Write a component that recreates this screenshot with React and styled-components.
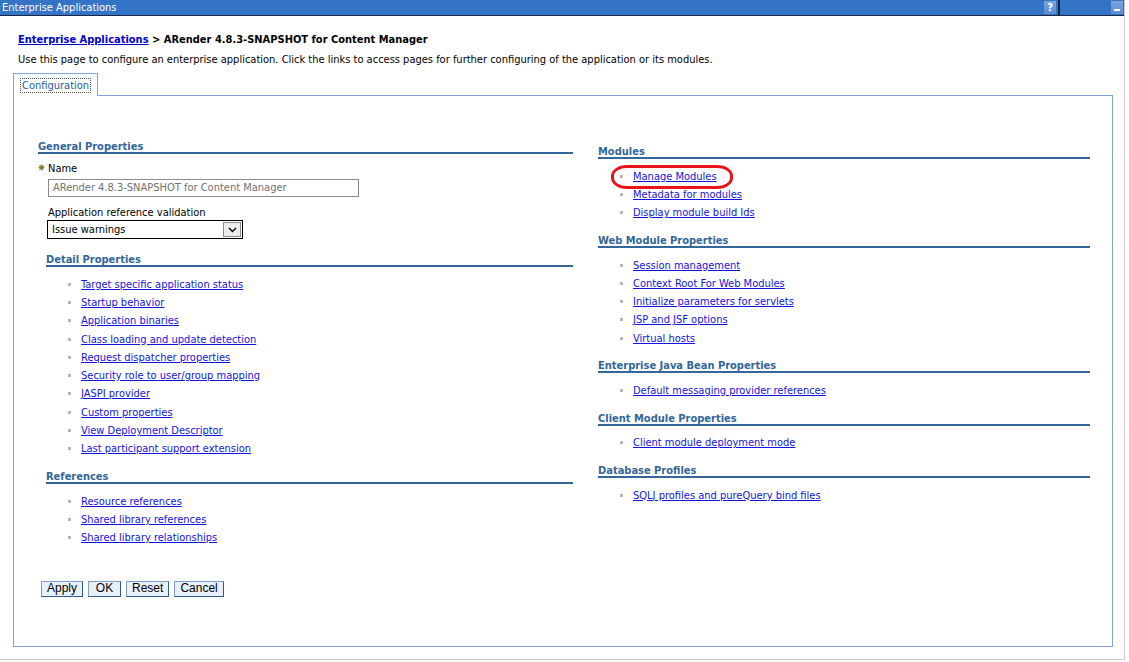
import React from "react";
import styled, { createGlobalStyle } from "styled-components";

const detailLinks = [
  "Target specific application status",
  "Startup behavior",
  "Application binaries",
  "Class loading and update detection",
  "Request dispatcher properties",
  "Security role to user/group mapping",
  "JASPI provider",
  "Custom properties",
  "View Deployment Descriptor",
  "Last participant support extension",
];

const referenceLinks = [
  "Resource references",
  "Shared library references",
  "Shared library relationships",
];

const rightSections = [
  {
    title: "Modules",
    links: ["Manage Modules", "Metadata for modules", "Display module build Ids"],
    marked: "Manage Modules",
  },
  {
    title: "Web Module Properties",
    links: [
      "Session management",
      "Context Root For Web Modules",
      "Initialize parameters for servlets",
      "JSP and JSF options",
      "Virtual hosts",
    ],
  },
  {
    title: "Enterprise Java Bean Properties",
    links: ["Default messaging provider references"],
  },
  {
    title: "Client Module Properties",
    links: ["Client module deployment mode"],
  },
  {
    title: "Database Profiles",
    links: ["SQLJ profiles and pureQuery bind files"],
  },
];

const buttons = ["Apply", "OK", "Reset", "Cancel"];

function LinkSection({ title, links, marked, indent }) {
  return (
    <Section $indent={indent}>
      <Heading>{title}</Heading>
      <LinkList>
        {links.map((l) => (
          <LinkItem key={l}>
            {l === marked && <Ring />}
            <Link href="#">{l}</Link>
          </LinkItem>
        ))}
      </LinkList>
    </Section>
  );
}

function App() {
  return (
    <>
      <GlobalStyle />
      <Frame>
        <TitleBar>
          <TitleText>Enterprise Applications</TitleText>
          <HelpButton>?</HelpButton>
          <Divider />
          <MinimizeButton />
        </TitleBar>
        <Content>
          <Breadcrumb>
            <CrumbLink href="#">Enterprise Applications</CrumbLink> &gt; ARender
            4.8.3-SNAPSHOT for Content Manager
          </Breadcrumb>
          <Description>
            Use this page to configure an enterprise application. Click the
            links to access pages for further configuring of the application
            or its modules.
          </Description>
          <TabStrip>
            <Tab>
              <TabLabel>Configuration</TabLabel>
            </Tab>
          </TabStrip>
          <Panel>
            <Columns>
              <Column>
                <Section>
                  <Heading>General Properties</Heading>
                  <Fields>
                    <NameLabel>
                      <Required viewBox="0 0 7 7">
                        <path
                          d="M3.5 0.5v6M0.5 3.5h6M1.3 1.3l4.4 4.4M5.7 1.3l-4.4 4.4"
                          stroke="#857a2c"
                          strokeWidth="1.2"
                        />
                      </Required>
                      Name
                    </NameLabel>
                    <TextBox>ARender 4.8.3-SNAPSHOT for Content Manager</TextBox>
                    <FieldLabel>Application reference validation</FieldLabel>
                    <SelectBox>
                      <span>Issue warnings</span>
                      <SelectArrow>
                        <svg width="9" height="6" viewBox="0 0 9 6">
                          <polyline
                            points="1,1 4.5,4.5 8,1"
                            fill="none"
                            stroke="#000"
                            strokeWidth="1.4"
                          />
                        </svg>
                      </SelectArrow>
                    </SelectBox>
                  </Fields>
                </Section>
                <LinkSection
                  title="Detail Properties"
                  links={detailLinks}
                  indent
                />
                <LinkSection title="References" links={referenceLinks} indent />
                <ButtonBar>
                  {buttons.map((b) => (
                    <Button key={b}>{b}</Button>
                  ))}
                </ButtonBar>
              </Column>
              <RightColumn>
                {rightSections.map((s) => (
                  <LinkSection key={s.title} {...s} />
                ))}
              </RightColumn>
            </Columns>
          </Panel>
        </Content>
      </Frame>
    </>
  );
}

const GlobalStyle = createGlobalStyle`
  html, body {
    margin: 0;
    padding: 0;
    background: #ffffff;
  }
  body {
    font-family: "DejaVu Sans Condensed", "DejaVu Sans", sans-serif;
    font-size: 11px;
    color: #000000;
  }
`;

const Frame = styled.div`
  width: 1125px;
  height: 660px;
  box-sizing: border-box;
  border-right: 1px solid #c8c8c8;
  border-bottom: 1px solid #c8c8c8;
`;

const TitleBar = styled.div`
  display: flex;
  align-items: center;
  height: 15px;
  background: #3374c6;
  border-bottom: 1px solid #1a2a44;
  color: #ffffff;
`;

const TitleText = styled.div`
  flex: 1;
  padding-left: 2px;
  line-height: 15px;
`;

const HelpButton = styled.div`
  width: 12px;
  height: 13px;
  margin-right: 2px;
  background: linear-gradient(#7aa6dc, #5a8cd0);
  color: #ffffff;
  font-weight: bold;
  font-size: 11px;
  line-height: 13px;
  text-align: center;
`;

const Divider = styled.div`
  width: 2px;
  height: 15px;
  background: #13223c;
  margin-right: 51px;
`;

const MinimizeButton = styled.div`
  position: relative;
  width: 12px;
  height: 13px;
  margin-right: 1px;
  background: linear-gradient(#7aa6dc, #5a8cd0);

  &::after {
    content: "";
    position: absolute;
    left: 3px;
    right: 3px;
    bottom: 3px;
    height: 2px;
    background: #ffffff;
  }
`;

const Content = styled.div`
  padding: 0 11px 0 13px;
`;

const Breadcrumb = styled.div`
  margin: 17px 0 0 5px;
  line-height: 14px;
  font-weight: bold;
`;

const CrumbLink = styled.a`
  color: #0000cc;
  text-decoration: underline;
`;

const Description = styled.div`
  margin: 6px 0 0 5px;
  line-height: 14px;
`;

const TabStrip = styled.div`
  display: flex;
  margin-top: 6px;
`;

const Tab = styled.div`
  position: relative;
  z-index: 1;
  width: 85px;
  height: 23px;
  box-sizing: border-box;
  margin-bottom: -1px;
  padding: 5px 0 0 8px;
  background: #ffffff;
  border: 1px solid #7fa5dc;
  border-bottom: none;
`;

const TabLabel = styled.span`
  color: #23609c;
  line-height: 12px;
  outline: 1px dotted #555555;
  padding: 0 1px;
  margin-left: -1px;
`;

const Panel = styled.div`
  height: 552px;
  box-sizing: border-box;
  border: 1px solid #7fa5dc;
  padding: 45px 22px 0 24px;
`;

const Columns = styled.div`
  display: grid;
  grid-template-columns: 535px 492px;
  column-gap: 25px;
`;

const Column = styled.div`
  display: flex;
  flex-direction: column;
`;

const RightColumn = styled(Column)`
  padding-top: 5px;
`;

const Section = styled.div`
  margin-left: ${(p) => (p.$indent ? "8px" : "0")};
  margin-bottom: 13px;
`;

const Heading = styled.div`
  color: #336699;
  font-weight: bold;
  line-height: 11px;
  border-bottom: 2px solid #336699;
`;

const LinkList = styled.ul`
  list-style: none;
  margin: 8px 0 0;
  padding: 0;
`;

const LinkItem = styled.li`
  position: relative;
  display: flex;
  align-items: center;
  height: 18.3px;
  padding-left: 22px;

  &::before {
    content: "";
    width: 3px;
    height: 3px;
    margin-right: 10px;
    background: #b4b4b4;
  }
`;

const Link = styled.a`
  color: #1414e0;
  text-decoration: underline;
`;

const Ring = styled.div`
  position: absolute;
  left: 13px;
  top: -2px;
  width: 122px;
  height: 24px;
  box-sizing: border-box;
  border: 3px solid #e8141c;
  border-radius: 16px / 11px;
  pointer-events: none;
`;

const Fields = styled.div`
  display: flex;
  flex-direction: column;
  align-items: flex-start;
  padding-left: 10px;
`;

const NameLabel = styled.div`
  position: relative;
  margin-top: 8px;
  line-height: 14px;
`;

const Required = styled.svg`
  position: absolute;
  left: -10px;
  top: 2px;
  width: 7px;
  height: 7px;
`;

const TextBox = styled.div`
  width: 311px;
  height: 18px;
  box-sizing: border-box;
  margin-top: 3px;
  padding-left: 4px;
  border: 1px solid #8c8c8c;
  color: #707070;
  line-height: 16px;
`;

const FieldLabel = styled.div`
  margin-top: 9px;
  line-height: 14px;
`;

const SelectBox = styled.div`
  display: flex;
  align-items: center;
  justify-content: space-between;
  width: 196px;
  height: 19px;
  box-sizing: border-box;
  margin-left: -1px;
  padding: 0 1px 0 4px;
  border: 1px solid #000000;
  margin-bottom: 2px;
`;

const SelectArrow = styled.div`
  display: flex;
  align-items: center;
  justify-content: center;
  width: 18px;
  height: 15px;
  box-sizing: border-box;
  background: #ececec;
  border: 1px solid #8a8a8a;
`;

const ButtonBar = styled.div`
  display: flex;
  gap: 5px;
  margin: 21px 0 0 3px;
`;

const Button = styled.button`
  height: 16px;
  min-width: 33px;
  padding: 0 5px;
  box-sizing: border-box;
  font-family: "Liberation Sans", Arial, sans-serif;
  font-size: 12px;
  line-height: 13px;
  color: #000000;
  background: #e9f0fb;
  border: 1px solid #7e9dc8;
  border-right-color: #2f5a8e;
  border-bottom-color: #2f5a8e;
`;

export default App;
